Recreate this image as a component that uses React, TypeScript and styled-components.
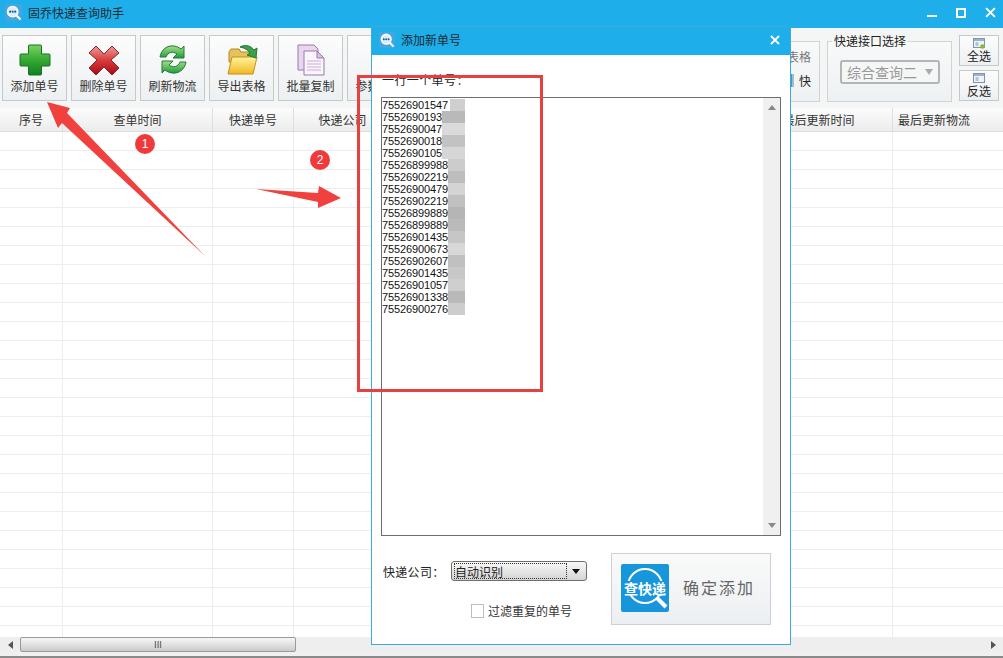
import React from "react";
import styled, { createGlobalStyle } from "styled-components";

const FONT = `"Noto Sans CJK SC", "Liberation Sans", sans-serif`;

const GlobalStyle = createGlobalStyle`
  html, body { margin: 0; padding: 0; background: #fff; }
  * { box-sizing: border-box; }
  body { font-family: ${FONT}; font-size: 12px; color: #333; }
`;

/** 主窗口 */
const Page = styled.div`
  position: relative;
  width: 1003px;
  height: 658px;
  overflow: hidden;
  display: flex;
  flex-direction: column;
  background: #f4f5f5;
`;

const TitleBar = styled.div`
  height: 28px;
  flex: none;
  background: #1eaeea;
  display: flex;
  align-items: center;
  padding: 0 7px 3px 5px;
  gap: 6px;
  color: #1d2a33;
  font-size: 12px;
`;

const WinButtons = styled.div`
  margin-left: auto;
  display: flex;
  align-items: center;
  gap: 19px;
`;

const Toolbar = styled.div`
  height: 80px;
  flex: none;
  display: flex;
  padding: 7px 4px 7px 2px;
  gap: 4px;
`;

const ToolButton = styled.button`
  width: 65px;
  height: 66px;
  flex: none;
  padding: 8px 0 0;
  display: flex;
  flex-direction: column;
  align-items: center;
  border: 1px solid #c5c9cb;
  background: linear-gradient(#fcfcfc, #edf0f2);
  font: 12px ${FONT};
  color: #333;
  line-height: 16px;
  svg { height: 32px; width: 32px; margin-bottom: 2px; flex: none; }
`;

const RightTools = styled.div`
  margin-left: auto;
  display: flex;
  gap: 7px;
`;

const Group = styled.fieldset<{ $w: number }>`
  width: ${(p) => p.$w}px;
  height: 67px;
  margin: 0;
  padding: 0;
  border: 1px solid #cfd3d6;
  background: linear-gradient(#f8f9f9, #eef1f3);
  legend {
    margin-left: 4px;
    padding: 0 2px;
    font-size: 12px;
    line-height: 12px;
    color: #222;
  }
`;

const ExportOptions = styled.div`
  display: flex;
  flex-direction: column;
  align-items: flex-end;
  padding: 1px 8px 0 0;
  gap: 7px;
  color: #777;
`;

const FastOption = styled.div`
  display: flex;
  align-items: center;
  gap: 5px;
  color: #222;
`;

const CheckMark = styled.span`
  width: 7px;
  height: 13px;
  background: #2e9fe0;
  border-right: 2px solid #a9b9c5;
`;

const ApiSelect = styled.div`
  width: 100px;
  height: 24px;
  margin: 13px 0 0 12px;
  display: flex;
  align-items: center;
  justify-content: space-between;
  padding: 0 5px 0 5px;
  border: 2px solid #b3b6b8;
  border-radius: 3px;
  background: #f5f6f6;
  color: #999;
  font-size: 14px;
`;

const SmallTriangle = styled.span`
  width: 0;
  height: 0;
  border: 4px solid transparent;
  border-top: 6px solid #aaa;
  border-bottom: 0;
`;

const SelectColumn = styled.div`
  width: 40px;
  display: flex;
  flex-direction: column;
  gap: 4px;
`;

const SmallButton = styled.button`
  height: 31px;
  padding: 2px 0 0;
  display: flex;
  flex-direction: column;
  align-items: center;
  border: 1px solid #c5c9cb;
  background: linear-gradient(#fcfcfc, #edf0f2);
  font: 12px/14px ${FONT};
  color: #222;
  svg { width: 12px; height: 11px; flex: none; }
`;

const Table = styled.div`
  flex: 1;
  overflow: hidden;
  background: #fff;
`;

const Row = styled.div<{ $head?: boolean }>`
  display: grid;
  grid-template-columns: 63px 150px 81px 98px 353px 148px 1fr;
  height: ${(p) => (p.$head ? 24 : 19)}px;
  border-bottom: 1px solid ${(p) => (p.$head ? "#dcdcdc" : "#ebeeee")};
  background: ${(p) => (p.$head ? "linear-gradient(#fcfcfc, #ececec)" : "#fff")};
`;

const Cell = styled.div<{ $head?: boolean }>`
  border-right: 1px solid ${(p) => (p.$head ? "#dedede" : "#ebeeee")};
  text-align: center;
  line-height: 23px;
  color: #333;
  &:last-child {
    border-right: 0;
    text-align: left;
    padding-left: 5px;
  }
`;

const HScroll = styled.div`
  height: 15px;
  flex: none;
  display: flex;
  align-items: center;
  background: #eeeeee;
`;

const ArrowSlot = styled.div`
  width: 20px;
  flex: none;
  display: flex;
  justify-content: center;
`;

const HThumb = styled.div`
  width: 276px;
  height: 15px;
  display: flex;
  align-items: center;
  justify-content: center;
  border: 1px solid #9a9a9a;
  border-radius: 2px;
  background: linear-gradient(#f6f6f6, #e4e4e4 45%, #c9c9c9);
  color: #444;
  font-size: 9px;
`;

const ArrowGlyph = styled.span<{ $dir: "left" | "right" | "up" | "down"; $c?: string }>`
  width: 0;
  height: 0;
  border: 4px solid transparent;
  ${(p) => (p.$dir === "left" ? "border-left: 0;" : "")}
  ${(p) => (p.$dir === "right" ? "border-right: 0;" : "")}
  ${(p) => (p.$dir === "up" ? "border-top: 0;" : "")}
  ${(p) => (p.$dir === "down" ? "border-bottom: 0;" : "")}
  border-${(p) =>
    ({ left: "right", right: "left", up: "bottom", down: "top" })[p.$dir]}: 5px solid ${(p) => p.$c ?? "#555"};
`;

const ScrollEnd = styled.div`
  margin-left: auto;
`;

const BottomStrip = styled.div`
  height: 6px;
  flex: none;
  background: #f0f0f0;
  border-bottom: 2px solid #8a8a8a;
  border-top: 3px solid #f0f0f0;
`;

/** 添加新单号 弹窗 */
const Dialog = styled.div`
  position: absolute;
  left: 371px;
  top: 26px;
  width: 420px;
  height: 619px;
  display: flex;
  flex-direction: column;
  background: #fff;
  border: 1px solid #3fa9d8;
`;

const DialogTitle = styled.div`
  height: 28px;
  flex: none;
  background: #1eaeea;
  display: flex;
  align-items: center;
  gap: 6px;
  padding: 0 10px 3px 7px;
  color: #1d2a33;
  font-size: 12px;
`;

const DialogClose = styled.div`
  margin-left: auto;
  display: flex;
`;

const DialogBody = styled.div`
  flex: 1;
  padding: 17px 9px 0;
  display: flex;
  flex-direction: column;
`;

const LineLabel = styled.div`
  height: 25px;
  line-height: 15px;
  padding-left: 1px;
  color: #222;
  letter-spacing: 0.4px;
`;

const NumberBox = styled.div`
  height: 439px;
  flex: none;
  display: flex;
  border: 1px solid #6e6e6e;
`;

const NumberList = styled.div`
  flex: 1;
  padding-top: 1px;
`;

const NumberRow = styled.div`
  display: flex;
  height: 12px;
  font: 11px/12px "Liberation Sans", sans-serif;
  letter-spacing: -0.13px;
  color: #111;
`;

const Digits = styled.span<{ $w: number }>`
  width: ${(p) => p.$w}px;
  overflow: hidden;
  white-space: nowrap;
`;

const Blur = styled.span<{ $c: string; $w: number }>`
  width: ${(p) => p.$w}px;
  background: ${(p) => p.$c};
`;

const VScroll = styled.div`
  width: 17px;
  flex: none;
  display: flex;
  flex-direction: column;
  justify-content: space-between;
  align-items: center;
  padding: 7px 0;
  background: #f0f0f0;
`;

const DialogFooter = styled.div`
  flex: 1;
  display: flex;
  padding: 17px 10px 0 2px;
`;

const FooterLeft = styled.div`
  width: 204px;
  padding-top: 8px;
`;

const CompanyRow = styled.div`
  display: flex;
  align-items: center;
  height: 20px;
  color: #222;
`;

const CompanyLabel = styled.span`
  width: 68px;
  flex: none;
  white-space: nowrap;
  letter-spacing: 0.3px;
`;

const CompanySelect = styled.div`
  width: 136px;
  height: 20px;
  flex: none;
  display: flex;
  align-items: center;
  justify-content: space-between;
  padding: 2px 6px 2px 2px;
  border: 1px solid #6f6f6f;
  border-radius: 3px;
  background: linear-gradient(#f8f8f8, #d4d4d4);
`;

const FocusText = styled.span`
  width: 113px;
  height: 16px;
  line-height: 15px;
  border: 1px dotted #333;
  color: #222;
`;

const FilterRow = styled.label`
  display: flex;
  align-items: center;
  gap: 4px;
  margin: 21px 0 0 88px;
  color: #333;
`;

const FilterBox = styled.span`
  width: 13px;
  height: 14px;
  background: #fff;
  border: 1px solid #bdbdbd;
`;

const ConfirmButton = styled.button`
  margin-left: 24px;
  width: 160px;
  height: 72px;
  padding: 0 0 2px 9px;
  display: flex;
  align-items: center;
  gap: 14px;
  border: 1px solid #c9d2d9;
  background: linear-gradient(#fafafa, #eceff2);
  font: 16px ${FONT};
  letter-spacing: 2px;
  color: #666;
`;

const ConfirmLabel = styled.span`
  margin-bottom: 3px;
`;

const QueryBadge = styled.span`
  position: relative;
  width: 48px;
  height: 48px;
  flex: none;
  border-radius: 2px;
  background: #1896dc;
  display: flex;
  align-items: center;
  justify-content: center;
  color: #fff;
  font: 700 14px ${FONT};
  letter-spacing: 0;
  svg { position: absolute; inset: 0; width: 48px; height: 48px; }
`;

const BadgeText = styled.span`
  position: relative;
  background: #1896dc;
  line-height: 14px;
  white-space: nowrap;
`;

/** 标注（红框/箭头/序号） */
const RedBox = styled.div`
  position: absolute;
  left: 357px;
  top: 75px;
  width: 186px;
  height: 317px;
  border: 3px solid #e8403f;
`;

const Arrows = styled.svg`
  position: absolute;
  left: 0;
  top: 0;
  pointer-events: none;
`;

const Step = styled.div<{ $x: number; $y: number }>`
  position: absolute;
  left: ${(p) => p.$x}px;
  top: ${(p) => p.$y}px;
  width: 20px;
  height: 20px;
  border-radius: 50%;
  background: #f0393b;
  color: #fff;
  font: 12px/20px "Liberation Sans", sans-serif;
  text-align: center;
`;

const Logo: React.FC<{ size: number }> = ({ size }) => (
  <svg width={size} height={size} viewBox="0 0 16 16" style={{ flex: "none" }}>
    <rect width="16" height="16" rx="1" fill="#45a6dd" />
    <circle cx="7.2" cy="7.2" r="5" fill="#d9eef9" stroke="#fff" strokeWidth="1.2" />
    <circle cx="4.8" cy="7.2" r="1" fill="#1c5f90" />
    <circle cx="7.2" cy="7.2" r="1" fill="#1c5f90" />
    <circle cx="9.6" cy="7.2" r="1" fill="#1c5f90" />
    <path d="M11 11L14.6 14.6" stroke="#fff" strokeWidth="2" />
  </svg>
);

const PlusIcon = () => (
  <svg viewBox="0 0 32 32">
    <defs>
      <linearGradient id="gr" x1="0" y1="0" x2="0" y2="1">
        <stop offset="0" stopColor="#79d35f" />
        <stop offset="0.55" stopColor="#2fa52f" />
        <stop offset="1" stopColor="#12801f" />
      </linearGradient>
    </defs>
    <path
      d="M10.5 1h11a1 1 0 0 1 1 1v8h7.500a1 1 0 0 1 1 1v10a1 1 0 0 1-1 1h-7.500v8a1 1 0 0 1-1 1h-11a1 1 0 0 1-1-1v-8H2a1 1 0 0 1-1-1V11a1 1 0 0 1 1-1h7.500V2a1 1 0 0 1 1-1z"
      fill="url(#gr)"
      stroke="#1a6e2a"
    />
  </svg>
);

const CrossIcon = () => (
  <svg viewBox="0 0 32 32">
    <defs>
      <linearGradient id="rd" x1="0" y1="0" x2="0" y2="1">
        <stop offset="0" stopColor="#f09a9a" />
        <stop offset="0.5" stopColor="#d83a3a" />
        <stop offset="1" stopColor="#a80c12" />
      </linearGradient>
    </defs>
    <path
      d="M8 2l8 8 8-8 7 7-8 7 8 8-7 7-8-8-8 8-7-7 8-8-8-7z"
      fill="url(#rd)"
      stroke="#7d2a2e"
      strokeLinejoin="round"
    />
  </svg>
);

const RefreshIcon = () => (
  <svg viewBox="0 0 32 32" fill="none">
    <defs>
      <linearGradient id="gn" x1="0" y1="0" x2="0" y2="1">
        <stop offset="0" stopColor="#a5e08a" />
        <stop offset="1" stopColor="#1f9a3a" />
      </linearGradient>
    </defs>
    <path
      d="M3 13C4 6 10 1 17 2c3 .5 5 1.500 7 3l3-3v12H16l4-4c-4-3-9-2-11 3z"
      fill="url(#gn)"
      stroke="#217a38"
    />
    <path
      d="M29 18c-1 7-7 12-14 11-3-.5-5-1.500-7-3l-3 3V17h11l-4 4c4 3 9 2 11-3z"
      fill="url(#gn)"
      stroke="#217a38"
    />
  </svg>
);

const FolderIcon = () => (
  <svg viewBox="0 0 32 32">
    <defs>
      <linearGradient id="yl" x1="0" y1="0" x2="0" y2="1">
        <stop offset="0" stopColor="#fff4a0" />
        <stop offset="1" stopColor="#f2b81e" />
      </linearGradient>
    </defs>
    <path d="M3 8l2-3h8l2 3h12v10H3z" fill="#e6c25a" stroke="#b5861f" />
    <path d="M6 13h25l-4 17H2z" fill="url(#yl)" stroke="#c08f1e" />
    <path d="M14 3c6-3 11-1 14 3l3-2-1 10-9-3 3-2c-2-3-5-5-10-6z" fill="#3aa04a" stroke="#23773a" />
  </svg>
);

const CopyIcon = () => (
  <svg viewBox="0 0 32 32">
    <path d="M3 1h16l4 4v21H3z" fill="#e8d6ef" stroke="#9a7aae" />
    <path d="M9 7h13l7 7v17H9z" fill="#faf4fb" stroke="#9a7aae" />
    <path d="M22 7v7h7z" fill="#d7c3de" stroke="#9a7aae" />
    <path d="M12 17h14M12 20h14M12 23h14M12 26h14" stroke="#dcc4e3" strokeWidth="1.3" />
  </svg>
);

const ParamIcon = () => (
  <svg viewBox="0 0 32 32">
    <rect x="8" y="3" width="18" height="26" rx="3" fill="#9b9b9b" stroke="#6f6f6f" />
    <circle cx="17" cy="12" r="4.500" fill="#d6d6d6" />
  </svg>
);

const TableIcon: React.FC<{ add?: boolean }> = ({ add }) => (
  <svg viewBox="0 0 12 11">
    <rect x="0.5" y="0.5" width="11" height="9" fill="#eef3f8" stroke="#7f95ad" />
    <rect x="1" y="1" width="10" height="2" fill="#9cb3cc" />
    <path d="M2.500 5h3M2.500 7h3" stroke="#7f95ad" />
    {add && <circle cx="9.500" cy="8.500" r="2.300" fill="#8ab83a" />}
  </svg>
);

const CloseGlyph: React.FC<{ size: number }> = ({ size }) => (
  <svg width={size} height={size} viewBox="0 0 10 10">
    <path d="M1 1l8 8M9 1l-8 8" stroke="#fff" strokeWidth="1.8" />
  </svg>
);

const TOOLS: { label: string; icon: React.ReactNode }[] = [
  { label: "添加单号", icon: <PlusIcon /> },
  { label: "删除单号", icon: <CrossIcon /> },
  { label: "刷新物流", icon: <RefreshIcon /> },
  { label: "导出表格", icon: <FolderIcon /> },
  { label: "批量复制", icon: <CopyIcon /> },
  { label: "参数设置", icon: <ParamIcon /> },
];

const COLUMNS = ["序号", "查单时间", "快递单号", "快递公司", "", "最后更新时间", "最后更新物流"];

const NUMBERS: { text: string; w: number; blur: number; c: string }[] = [
  { text: "75526901547", w: 68, blur: 15, c: "#cfcfcf" },
  { text: "7552690193", w: 60, blur: 23, c: "#b9b9b9" },
  { text: "7552690047", w: 60, blur: 23, c: "#dadada" },
  { text: "7552690018", w: 60, blur: 23, c: "#c2c2c2" },
  { text: "7552690105", w: 60, blur: 23, c: "#d6d6d6" },
  { text: "75526899988", w: 66, blur: 17, c: "#cccccc" },
  { text: "75526902219", w: 66, blur: 17, c: "#bdbdbd" },
  { text: "75526900479", w: 66, blur: 17, c: "#d4d4d4" },
  { text: "75526902219", w: 66, blur: 17, c: "#c0c0c0" },
  { text: "75526899889", w: 66, blur: 17, c: "#b5b5b5" },
  { text: "75526899889", w: 66, blur: 17, c: "#bababa" },
  { text: "75526901435", w: 66, blur: 17, c: "#c6c6c6" },
  { text: "75526900673", w: 66, blur: 17, c: "#d8d8d8" },
  { text: "75526902607", w: 66, blur: 17, c: "#c0c0c0" },
  { text: "75526901435", w: 66, blur: 17, c: "#c8c8c8" },
  { text: "75526901057", w: 66, blur: 17, c: "#cfcfcf" },
  { text: "75526901338", w: 66, blur: 17, c: "#b9b9b9" },
  { text: "75526900276", w: 66, blur: 17, c: "#cdcdcd" },
];

const App: React.FC = () => {
  return (
    <Page>
      <GlobalStyle />
      <TitleBar>
        <Logo size={17} />
        固乔快递查询助手
        <WinButtons>
          <svg width="10" height="10" viewBox="0 0 10 10">
            <path d="M0 8h10" stroke="#fff" strokeWidth="2" />
          </svg>
          <svg width="10" height="10" viewBox="0 0 10 10">
            <rect x="1" y="1" width="8" height="8" fill="none" stroke="#fff" strokeWidth="2" />
          </svg>
          <CloseGlyph size={11} />
        </WinButtons>
      </TitleBar>

      <Toolbar>
        {TOOLS.map((tool) => (
          <ToolButton key={tool.label}>
            {tool.icon}
            {tool.label}
          </ToolButton>
        ))}
        <RightTools>
          <Group $w={80}>
            <legend>导出</legend>
            <ExportOptions>
              <span>表格</span>
              <FastOption>
                <CheckMark />
                快
              </FastOption>
            </ExportOptions>
          </Group>
          <Group $w={125}>
            <legend>快递接口选择</legend>
            <ApiSelect>
              综合查询二
              <SmallTriangle />
            </ApiSelect>
          </Group>
          <SelectColumn>
            <SmallButton>
              <TableIcon add />
              全选
            </SmallButton>
            <SmallButton>
              <TableIcon />
              反选
            </SmallButton>
          </SelectColumn>
        </RightTools>
      </Toolbar>

      <Table>
        <Row $head>
          {COLUMNS.map((name, i) => (
            <Cell $head key={i}>
              {name}
            </Cell>
          ))}
        </Row>
        {Array.from({ length: 27 }).map((_, r) => (
          <Row key={r}>
            {COLUMNS.map((_, c) => (
              <Cell key={c} />
            ))}
          </Row>
        ))}
      </Table>

      <HScroll>
        <ArrowSlot>
          <ArrowGlyph $dir="left" />
        </ArrowSlot>
        <HThumb>III</HThumb>
        <ScrollEnd>
          <ArrowSlot>
            <ArrowGlyph $dir="right" />
          </ArrowSlot>
        </ScrollEnd>
      </HScroll>
      <BottomStrip />

      <Dialog>
        <DialogTitle>
          <Logo size={16} />
          添加新单号
          <DialogClose>
            <CloseGlyph size={10} />
          </DialogClose>
        </DialogTitle>
        <DialogBody>
          <LineLabel>一行一个单号：</LineLabel>
          <NumberBox>
            <NumberList>
              {NUMBERS.map((n, i) => (
                <NumberRow key={i}>
                  <Digits $w={n.w}>{n.text}</Digits>
                  <Blur $c={n.c} $w={n.blur} />
                </NumberRow>
              ))}
            </NumberList>
            <VScroll>
              <ArrowGlyph $dir="up" $c="#888" />
              <ArrowGlyph $dir="down" $c="#888" />
            </VScroll>
          </NumberBox>
          <DialogFooter>
            <FooterLeft>
              <CompanyRow>
                <CompanyLabel>快递公司：</CompanyLabel>
                <CompanySelect>
                  <FocusText>自动识别</FocusText>
                  <ArrowGlyph $dir="down" $c="#111" />
                </CompanySelect>
              </CompanyRow>
              <FilterRow>
                <FilterBox />
                过滤重复的单号
              </FilterRow>
            </FooterLeft>
            <ConfirmButton>
              <QueryBadge>
                <svg viewBox="0 0 48 48" fill="none">
                  <circle cx="24" cy="22" r="17" stroke="#fff" strokeWidth="2" />
                  <path d="M36 34l9 9" stroke="#fff" strokeWidth="4" />
                </svg>
                <BadgeText>查快递</BadgeText>
              </QueryBadge>
              <ConfirmLabel>确定添加</ConfirmLabel>
            </ConfirmButton>
          </DialogFooter>
        </DialogBody>
      </Dialog>

      <RedBox />
      <Arrows width="1003" height="658" viewBox="0 0 1003 658">
        <polygon points="47,102 70,108 67,113 205,256 62,123 58,128" fill="#f0413f" />
        <polygon points="256,189 318,193 319,186 341,198 318,208 318,202" fill="#f0413f" />
      </Arrows>
      <Step $x={135} $y={134}>1</Step>
      <Step $x={310} $y={150}>2</Step>
    </Page>
  );
};

export default App;
